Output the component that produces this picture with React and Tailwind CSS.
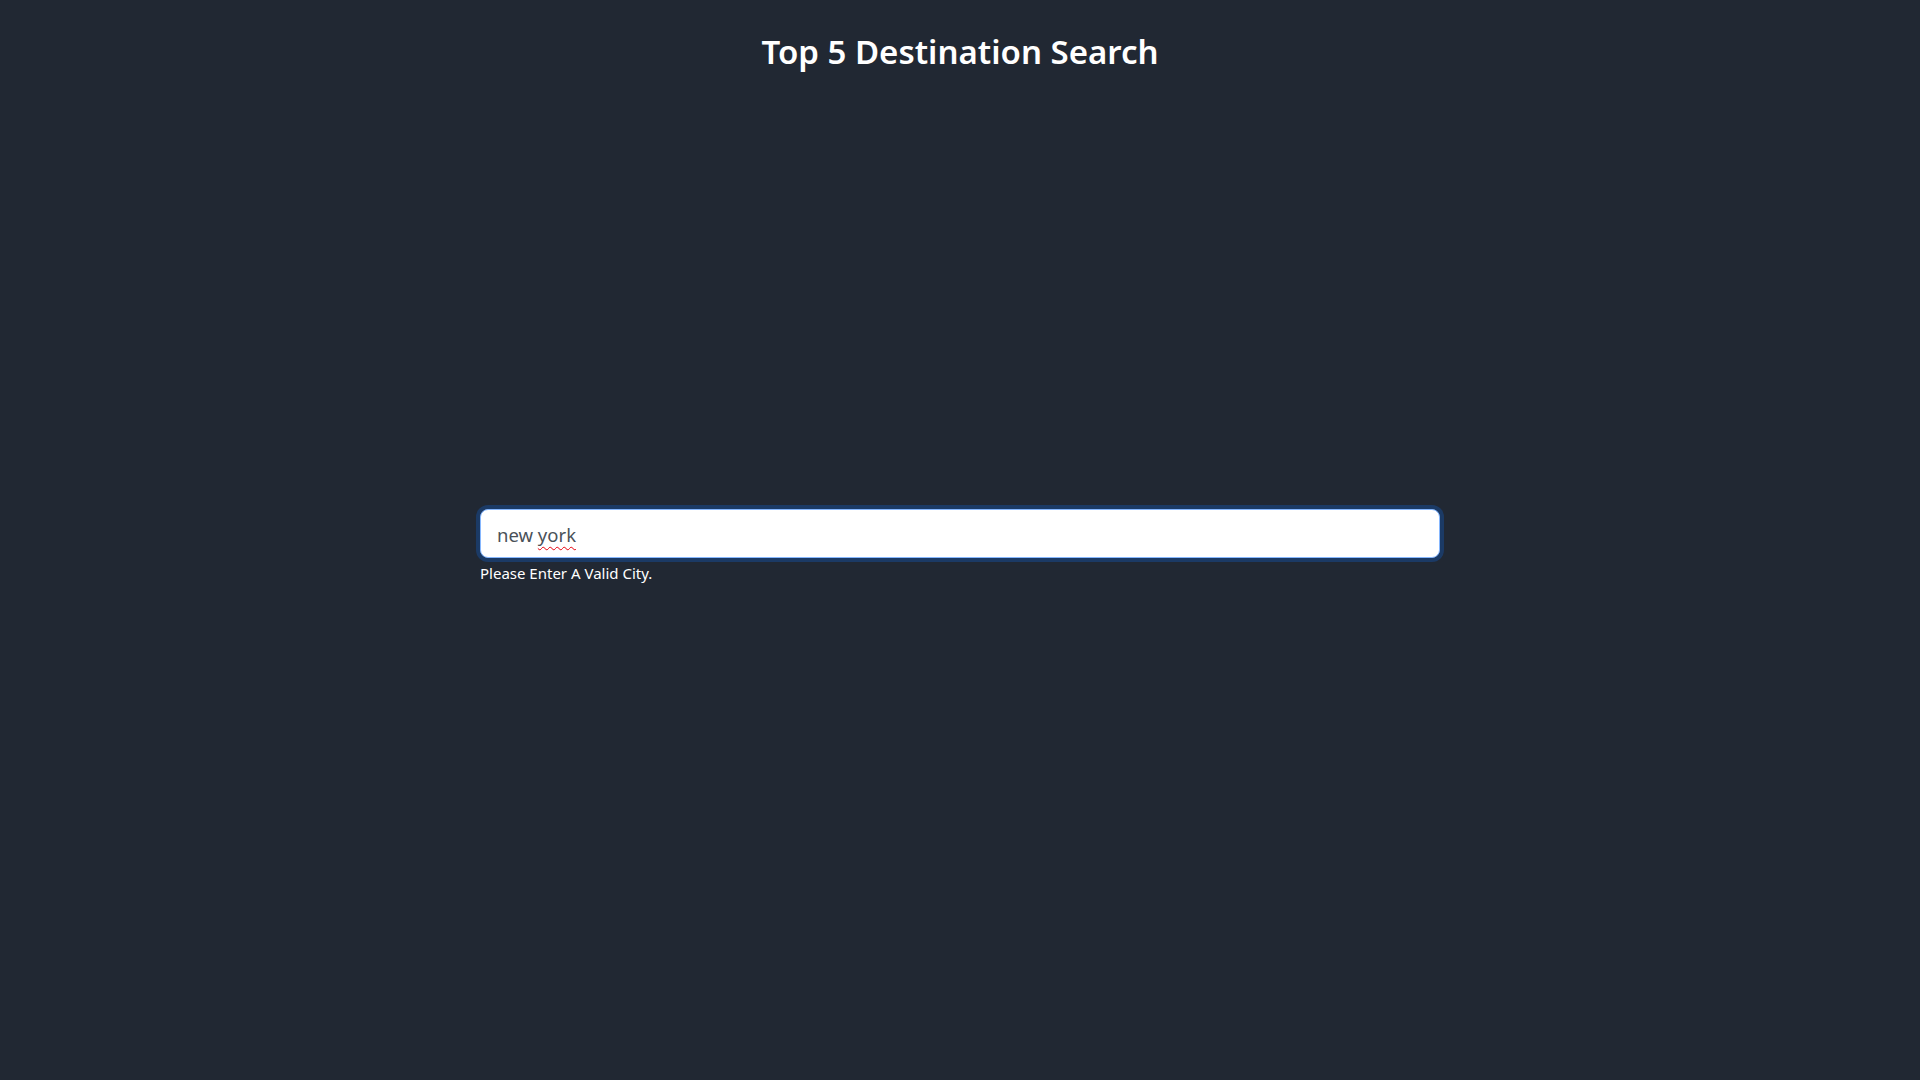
import React from 'react';

export default function App() {
  return (
    <div className="min-h-screen w-full bg-[#212833] text-white" style={{ fontFamily: '"Noto Sans", "Open Sans", sans-serif' }}>
      <h1 className="pt-[26px] text-center text-[33px] font-semibold leading-[52px]">
        Top 5 Destination Search
      </h1>

      <div className="mx-auto mt-[431px] w-[960px]">
        <div className="flex h-[49px] items-center rounded-[8px] border border-[#86b7fe] bg-white px-4 pt-[3px] shadow-[0_0_0_4px_rgba(13,110,253,0.25)]">
          <span className="text-[18.5px] text-[#4a5159]">
            new <span className="underline decoration-wavy decoration-red-600 decoration-1 underline-offset-4">york</span>
          </span>
        </div>
        <p className="mt-[3px] text-[15px] leading-6">Please Enter A Valid City.</p>
      </div>
    </div>
  );
}
